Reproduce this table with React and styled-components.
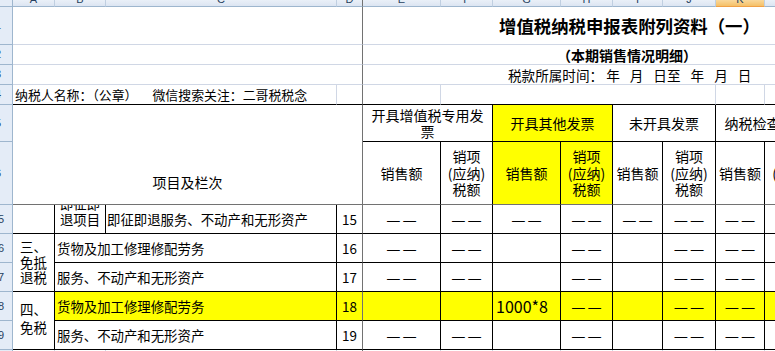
import React from 'react';
import styled, { createGlobalStyle } from 'styled-components';

const colours = {
  ink: '#000000',
  grid: '#d0d7e5',
  freeze: '#727272',
  headBg: '#e4ecf7',
  headLine: '#9eb6ce',
  headSep: '#c0cfe1',
  headText: '#27415f',
  pickTop: '#f9d89c',
  pickBottom: '#f5c067',
  pickLine: '#f0a045',
  yellow: '#ffff00',
};

const GlobalStyle = createGlobalStyle`
  html, body {
    margin: 0;
    padding: 0;
    background: #fff;
    overflow: hidden;
  }
  body {
    font-family: "Noto Sans CJK SC", "Noto Sans", sans-serif;
  }
`;

const Screen = styled.div`
  width: 775px;
  height: 351px;
  overflow: hidden;
  background: #fff;
`;

const Sheet = styled.div`
  display: grid;
  grid-template-columns: 13px 42px 51px 231px 26px 78px 52px 68px 52px 50px 53px 49px 53px;
  grid-template-rows: 7px 38px 20px 20px 20px 37px 63px 29px 29px 29px 29px 29px 20px;
  width: max-content;
  font-family: "Noto Sans CJK SC", "Noto Sans", sans-serif;
  color: ${ colours.ink };
`;

const Corner = styled.div`
  grid-column: 1;
  grid-row: 1;
  background: ${ colours.headBg };
  border-right: 1px solid ${ colours.headLine };
  border-bottom: 1px solid ${ colours.headLine };
`;

const ColHead = styled.div`
  grid-column: ${ props => props.$c };
  grid-row: 1;
  display: flex;
  justify-content: center;
  align-items: flex-end;
  overflow: hidden;
  background: ${ props => props.$on
    ? `linear-gradient(${ colours.pickTop }, ${ colours.pickBottom })`
    : 'linear-gradient(#eaf0f8, #dce5f2)' };
  border-right: 1px solid ${ props => props.$line };
  border-bottom: 1px solid ${ props => props.$on ? colours.pickLine : colours.headLine };
`;

const ColLetter = styled.span`
  font: 11px/11px "Liberation Sans", Arial, sans-serif;
  color: ${ colours.headText };
  margin-bottom: 1px;
`;

const RowHead = styled.div`
  grid-column: 1;
  grid-row: ${ props => props.$r };
  display: flex;
  align-items: center;
  overflow: hidden;
  background: ${ colours.headBg };
  border-right: 1px solid ${ colours.headLine };
  border-bottom: 1px solid ${ colours.headLine };
`;

const RowNum = styled.span`
  flex: none;
  width: 28px;
  margin-left: -16px;
  text-align: center;
  font: 11px/11px "Liberation Sans", Arial, sans-serif;
  color: ${ colours.headText };
`;

const Cell = styled.div`
  grid-column: ${ props => props.$c } / span ${ props => props.$cs || 1 };
  grid-row: ${ props => props.$r } / span ${ props => props.$rs || 1 };
  min-width: 0;
  display: flex;
  align-items: ${ props => props.$v || 'center' };
  justify-content: ${ props => props.$h || 'center' };
  padding: ${ props => props.$pad || '0' };
  background: ${ props => props.$bg || '#fff' };
  border-right: 1px solid ${ props => props.$rb || 'transparent' };
  border-bottom: 1px solid ${ props => props.$bb || 'transparent' };
  overflow: ${ props => props.$clip ? 'hidden' : 'visible' };
  white-space: pre-line;
  text-align: center;
  font-size: ${ props => props.$fs || 13.4 }px;
  font-weight: ${ props => props.$bold ? 700 : 400 };
  line-height: ${ props => props.$lh || 16 }px;
`;

const Title = styled.span`
  font-size: 17.4px;
  font-weight: 700;
  white-space: nowrap;
`;

const DateLine = styled.div`
  display: flex;
  gap: 10px;
  font-size: 13.6px;
  white-space: nowrap;
`;

const DateHead = styled.span`
  margin-right: -7px;
`;

const Owner = styled.span`
  font-size: 12.9px;
  white-space: nowrap;
  margin-left: ${ props => props.$gap || 0 }px;
`;

// two dashes kept apart so that the font cannot join them into one rule
const DashPair = styled.span`
  display: flex;
  gap: 2px;
  font-size: 16px;
  line-height: 12px;
  margin-top: -1px;
`;

const Amount = styled.span`
  font-size: 16px;
  white-space: nowrap;
`;

const letters = [ 'A', 'B', 'C', 'D', 'E', 'F', 'G', 'H', 'I', 'J', 'K', 'L' ];
const rowNums = [ 1, 2, 3, 4, 5, 6, 15, 16, 17, 18, 19, 20 ];

const DASH = '——';
const plain = [ DASH, DASH, '', DASH, '', DASH, DASH, DASH ];

const bodyRows = [
  { r: 9, no: 16, text: '货物及加工修理修配劳务', vals: plain },
  { r: 10, no: 17, text: '服务、不动产和无形资产', vals: plain },
  { r: 11, no: 18, text: '货物及加工修理修配劳务', hot: true, vals: [ '', '', '1000*8', DASH, '', DASH, DASH, DASH ] },
  { r: 12, no: 19, text: '服务、不动产和无形资产', vals: plain },
];

const groups = [
  { c: 6, text: '开具增值税专用发\n票' },
  { c: 8, text: '开具其他发票', hot: true },
  { c: 10, text: '未开具发票' },
  { c: 12, text: '纳税检查调整' },
];

const renderDash = () => (
  <DashPair>
    <span>—</span>
    <span>—</span>
  </DashPair>
);

const renderValue = ( val ) => {
  if ( val === DASH ) return renderDash();
  if ( val ) return <Amount>{ val }</Amount>;
  return null;
};

export default function App() {
  return (
    <>
      <GlobalStyle />
      <Screen>
        <Sheet>
          <Corner />
          { letters.map( ( l, i ) => (
            <ColHead key={ l } $c={ i + 2 } $on={ l === 'K' } $line={ l === 'D' ? colours.freeze : colours.headSep }>
              <ColLetter>{ l }</ColLetter>
            </ColHead>
          ) ) }
          { rowNums.map( ( n, i ) => (
            <RowHead key={ n } $r={ i + 2 }>
              <RowNum>{ n }</RowNum>
            </RowHead>
          ) ) }

          {/* top pane: title block */}
          <Cell $c={ 2 } $cs={ 4 } $r={ 2 } $rb={ colours.freeze } $bb={ colours.grid } />
          <Cell $c={ 6 } $cs={ 8 } $r={ 2 } $bb={ colours.grid } $h="flex-start" $pad="0 0 0 136px">
            <Title>增值税纳税申报表附列资料（一）</Title>
          </Cell>
          <Cell $c={ 2 } $cs={ 4 } $r={ 3 } $rb={ colours.freeze } $bb={ colours.grid } />
          <Cell $c={ 6 } $cs={ 8 } $r={ 3 } $bb={ colours.grid } $h="flex-start" $pad="0 0 0 194px" $fs={ 14 } $bold>
            （本期销售情况明细）
          </Cell>
          <Cell $c={ 2 } $cs={ 4 } $r={ 4 } $rb={ colours.freeze } $bb={ colours.grid } />
          <Cell $c={ 6 } $cs={ 8 } $r={ 4 } $bb={ colours.grid } $h="flex-start" $pad="0 0 0 145px">
            <DateLine>
              <DateHead>税款所属时间：</DateHead>
              <span>年</span>
              <span>月</span>
              <span>日至</span>
              <span>年</span>
              <span>月</span>
              <span>日</span>
            </DateLine>
          </Cell>

          <Cell $c={ 2 } $cs={ 3 } $r={ 5 } $rb={ colours.grid } $bb={ colours.ink } $h="flex-start" $pad="0 0 0 2px">
            <Owner>纳税人名称：（公章）</Owner>
            <Owner $gap={ 15 }>微信搜索关注：二哥税税念</Owner>
          </Cell>
          <Cell $c={ 5 } $r={ 5 } $rb={ colours.freeze } $bb={ colours.ink } />
          <Cell $c={ 6 } $r={ 5 } $rb={ colours.grid } $bb={ colours.ink } />
          <Cell $c={ 7 } $cs={ 5 } $r={ 5 } $rb={ colours.grid } $bb={ colours.ink } />
          <Cell $c={ 12 } $r={ 5 } $rb={ colours.grid } $bb={ colours.ink } />
          <Cell $c={ 13 } $r={ 5 } $rb={ colours.grid } $bb={ colours.ink } />

          {/* column headings */}
          <Cell $c={ 2 } $cs={ 4 } $r={ 6 } $rs={ 2 } $rb={ colours.freeze } $bb={ colours.freeze } $v="flex-end" $pad="0 0 14px 0" $fs={ 14 }>
            项目及栏次
          </Cell>
          { groups.map( g => (
            <Cell key={ g.c } $c={ g.c } $cs={ 2 } $r={ 6 } $rb={ colours.ink } $bb={ colours.ink } $bg={ g.hot ? colours.yellow : '#fff' } $fs={ 14 }>
              { g.text }
            </Cell>
          ) ) }
          { [ 6, 7, 8, 9, 10, 11, 12, 13 ].map( ( c, i ) => (
            <Cell key={ c } $c={ c } $r={ 7 } $rb={ colours.ink } $bb={ colours.freeze } $bg={ c === 8 || c === 9 ? colours.yellow : '#fff' } $fs={ 14 } $lh={ 16.5 }>
              { i % 2 === 0 ? '销售额' : '销项\n(应纳)\n税额' }
            </Cell>
          ) ) }

          {/* row 15 */}
          <Cell $c={ 2 } $r={ 8 } $rb={ colours.ink } $bb={ colours.ink } />
          <Cell $c={ 3 } $r={ 8 } $rb={ colours.ink } $bb={ colours.ink } $v="flex-end" $pad="0 0 6px 0" $clip>
            { '即征即\n退项目' }
          </Cell>
          <Cell $c={ 4 } $r={ 8 } $rb={ colours.ink } $bb={ colours.ink } $h="flex-start" $pad="0 0 0 1px">
            即征即退服务、不动产和无形资产
          </Cell>
          <Cell $c={ 5 } $r={ 8 } $rb={ colours.freeze } $bb={ colours.ink }>15</Cell>
          { [ 6, 7, 8, 9, 10, 11, 12, 13 ].map( c => (
            <Cell key={ c } $c={ c } $r={ 8 } $rb={ colours.ink } $bb={ colours.ink }>
              { renderDash() }
            </Cell>
          ) ) }

          {/* groups of rows */}
          <Cell $c={ 2 } $r={ 9 } $rs={ 2 } $rb={ colours.ink } $bb={ colours.ink } $lh={ 15.8 }>
            { '三、\n免抵\n退税' }
          </Cell>
          <Cell $c={ 2 } $r={ 11 } $rs={ 2 } $rb={ colours.ink } $bb={ colours.ink } $lh={ 18.5 } $pad="0 0 5px 0">
            { '四、\n免税' }
          </Cell>
          { bodyRows.map( row => {
            const bg = row.hot ? colours.yellow : '#fff';
            return (
              <React.Fragment key={ row.no }>
                <Cell $c={ 3 } $cs={ 2 } $r={ row.r } $rb={ colours.ink } $bb={ colours.ink } $bg={ bg } $h="flex-start" $pad="0 0 0 2px">
                  { row.text }
                </Cell>
                <Cell $c={ 5 } $r={ row.r } $rb={ colours.freeze } $bb={ colours.ink } $bg={ bg }>
                  { row.no }
                </Cell>
                { row.vals.map( ( val, i ) => (
                  <Cell
                    key={ i }
                    $c={ 6 + i }
                    $r={ row.r }
                    $rb={ colours.ink }
                    $bb={ colours.ink }
                    $bg={ bg }
                    $h={ val && val !== DASH ? 'flex-start' : 'center' }
                    $pad={ val && val !== DASH ? '0 0 0 3px' : '0' }
                  >
                    { renderValue( val ) }
                  </Cell>
                ) ) }
              </React.Fragment>
            );
          } ) }

          {/* row 20, barely visible */}
          <Cell $c={ 2 } $r={ 13 } $rb={ colours.grid } />
          <Cell $c={ 3 } $r={ 13 } $rb={ colours.grid } />
          <Cell $c={ 4 } $r={ 13 } $rb={ colours.grid } />
          <Cell $c={ 5 } $r={ 13 } $rb={ colours.freeze } />
          { [ 6, 7, 8, 9, 10, 11, 12, 13 ].map( c => (
            <Cell key={ c } $c={ c } $r={ 13 } $rb={ colours.grid } />
          ) ) }
        </Sheet>
      </Screen>
    </>
  );
}
